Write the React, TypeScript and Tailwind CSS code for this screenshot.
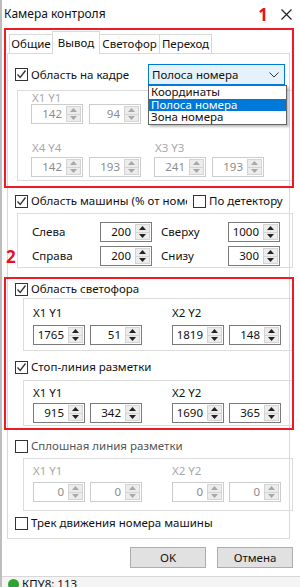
import React from "react";

function Check({ on }: { on?: boolean }) {
  return (
    <span className="flex h-[13px] w-[13px] shrink-0 items-center justify-center border border-[#333333] bg-white">
      {on && (
        <svg width="11" height="11" viewBox="0 0 11 11" fill="none">
          <path d="M1.5 5.5 L4.2 8.5 L9.5 1.5" stroke="#333333" strokeWidth="1.3" />
        </svg>
      )}
    </span>
  );
}

function Spin({ value, off }: { value: string; off?: boolean }) {
  return (
    <div
      className={
        off
          ? "flex h-[20px] w-[52px] shrink-0 border border-[#cccccc] bg-white text-[#8c8c8c]"
          : "flex h-[20px] w-[52px] shrink-0 border border-[#7a7a7a] bg-white text-[#111111]"
      }
    >
      <div className="flex-1 pr-[4px] text-right leading-[18px]">{value}</div>
      <div className="my-[1px] mr-[1px] flex w-[15px] flex-col border border-[#d4d4d4] bg-[#ececec]">
        <div className="flex flex-1 items-center justify-center border-b border-[#d4d4d4]">
          <svg width="7" height="4" viewBox="0 0 7 4">
            <path d="M0 4 L3.5 0 L7 4 Z" fill={off ? "#a8a8a8" : "#222222"} />
          </svg>
        </div>
        <div className="flex flex-1 items-center justify-center">
          <svg width="7" height="4" viewBox="0 0 7 4">
            <path d="M0 0 L3.5 4 L7 0 Z" fill={off ? "#a8a8a8" : "#222222"} />
          </svg>
        </div>
      </div>
    </div>
  );
}

function CheckRow({ on, label, dim }: { on?: boolean; label: string; dim?: boolean }) {
  return (
    <div className="flex h-[16px] items-center gap-[3px]">
      <Check on={on} />
      <span className={dim ? "whitespace-nowrap text-[#555555]" : "whitespace-nowrap"}>{label}</span>
    </div>
  );
}

export default function App() {
  const tabs = [
    { t: "Общие", w: "w-[44px]" },
    { t: "Вывод", w: "w-[48px]", sel: true },
    { t: "Светофор", w: "w-[61px]" },
    { t: "Переход", w: "w-[53px]" },
  ];
  return (
    <div className="relative h-[587px] w-[300px] overflow-hidden border-l-2 border-[#bdbdbd] bg-white font-['Noto_Sans','DejaVu_Sans',sans-serif] text-[11.5px] text-[#111111]">
      {/* title bar */}
      <div className="flex h-[28px] items-center pl-[2px] pr-[8px]">
        <span className="flex-1 text-[12px]">Камера контроля</span>
        <span className="mr-[13px] text-[17px] font-bold leading-none text-[#e81123]">1</span>
        <svg width="11" height="11" viewBox="0 0 11 11">
          <path d="M0.5 0.5 L10.5 10.5 M10.5 0.5 L0.5 10.5" stroke="#222222" strokeWidth="1.2" />
        </svg>
      </div>

      {/* tabs */}
      <div className="ml-[8px] flex h-[25px] items-end">
        {tabs.map((tb) =>
          tb.sel ? (
            <div
              key={tb.t}
              className={`relative z-10 -mb-px -ml-px flex h-[23px] ${tb.w} items-start justify-center border border-b-0 border-[#d9d9d9] bg-white pt-[2px]`}
            >
              {tb.t}
            </div>
          ) : (
            <div
              key={tb.t}
              className={`-ml-px flex h-[19px] ${tb.w} items-center justify-center border border-b-0 border-[#d9d9d9] bg-white`}
            >
              {tb.t}
            </div>
          )
        )}
      </div>

      {/* panel */}
      <div className="ml-[5px] w-[283px] border border-[#d9d9d9] pb-[7px] pl-[7px]">
        {/* row 1 */}
        <div className="mt-[10px] flex h-[21px] items-center">
          <div className="w-[133px]">
            <CheckRow on label="Область на кадре" />
          </div>
          <div className="flex h-[21px] w-[137px] items-center justify-between border border-[#0078d7] bg-[#e5f1fb] pl-[3px] pr-[5px]">
            <span>Полоса номера</span>
            <svg width="10" height="6" viewBox="0 0 10 6" fill="none">
              <path d="M0.5 0.5 L5 5 L9.5 0.5" stroke="#333333" strokeWidth="1" />
            </svg>
          </div>
        </div>

        {/* group 1 (disabled) */}
        <div className="ml-[2px] mt-[5px] w-[276px] border border-[#dcdcdc] pb-[3px]">
          <div className="flex h-[13px] items-center pl-[14px] text-[#a8a8a8]">
            <span className="w-[123px]">X1 Y1</span>
            <span>X2 Y2</span>
          </div>
          <div className="flex pl-[13px]">
            <Spin value="142" off />
            <div className="ml-[6px]"><Spin value="94" off /></div>
            <div className="ml-[13px]"><Spin value="241" off /></div>
            <div className="ml-[6px]"><Spin value="94" off /></div>
          </div>
          <div className="mt-[17px] flex h-[14px] items-center pl-[14px] text-[#a8a8a8]">
            <span className="w-[123px]">X4 Y4</span>
            <span>X3 Y3</span>
          </div>
          <div className="mt-[2px] flex pl-[13px]">
            <Spin value="142" off />
            <div className="ml-[6px]"><Spin value="193" off /></div>
            <div className="ml-[13px]"><Spin value="241" off /></div>
            <div className="ml-[6px]"><Spin value="193" off /></div>
          </div>
        </div>

        {/* car area */}
        <div className="mt-[12px] flex items-center">
          <div className="w-[172px] overflow-hidden">
            <CheckRow on label="Область машины (% от номера)" />
          </div>
          <div className="ml-[6px]">
            <CheckRow label="По детектору" />
          </div>
        </div>
        <div className="ml-[2px] mt-[4px] w-[276px] border border-[#dcdcdc] pb-[1px] pt-[8px]">
          <div className="flex h-[20px] items-center pl-[14px]">
            <span className="w-[68px]">Слева</span>
            <Spin value="200" />
            <span className="w-[76px] pl-[9px]">Сверху</span>
            <Spin value="1000" />
          </div>
          <div className="mt-[4px] flex h-[20px] items-center pl-[14px]">
            <span className="w-[68px]">Справа</span>
            <Spin value="200" />
            <span className="w-[76px] pl-[9px]">Снизу</span>
            <Spin value="300" />
          </div>
        </div>

        {/* traffic light */}
        <div className="mt-[13px]">
          <CheckRow on label="Область светофора" />
        </div>
        <div className="ml-[8px] mt-[1px] w-[270px] border border-[#dcdcdc] pb-[5px] pt-[7px]">
          <div className="flex h-[14px] items-center pl-[9px]">
            <span className="w-[139px]">X1 Y1</span>
            <span>X2 Y2</span>
          </div>
          <div className="mt-[5px] flex pl-[9px]">
            <Spin value="1765" />
            <div className="ml-[5px]"><Spin value="51" /></div>
            <div className="ml-[30px]"><Spin value="1819" /></div>
            <div className="ml-[5px]"><Spin value="148" /></div>
          </div>
        </div>

        {/* stop line */}
        <div className="mt-[8px]">
          <CheckRow on label="Стоп-линия разметки" />
        </div>
        <div className="ml-[8px] mt-[5px] w-[270px] border border-[#dcdcdc] pb-[2px] pt-[5px]">
          <div className="flex h-[14px] items-center pl-[9px]">
            <span className="w-[139px]">X1 Y1</span>
            <span>X2 Y2</span>
          </div>
          <div className="mt-[3px] flex pl-[9px]">
            <Spin value="915" />
            <div className="ml-[5px]"><Spin value="342" /></div>
            <div className="ml-[30px]"><Spin value="1690" /></div>
            <div className="ml-[5px]"><Spin value="365" /></div>
          </div>
        </div>

        {/* solid line */}
        <div className="mt-[12px]">
          <CheckRow label="Сплошная линия разметки" dim />
        </div>
        <div className="ml-[8px] mt-[4px] w-[270px] border border-[#dcdcdc] pb-[8px] pt-[5px]">
          <div className="flex h-[14px] items-center pl-[9px] text-[#a8a8a8]">
            <span className="w-[139px]">X1 Y1</span>
            <span>X2 Y2</span>
          </div>
          <div className="mt-[4px] flex pl-[9px]">
            <Spin value="0" off />
            <div className="ml-[5px]"><Spin value="0" off /></div>
            <div className="ml-[30px]"><Spin value="0" off /></div>
            <div className="ml-[5px]"><Spin value="0" off /></div>
          </div>
        </div>

        <div className="mt-[4px]">
          <CheckRow label="Трек движения номера машины" />
        </div>
      </div>

      {/* buttons */}
      <div className="mt-[8px] flex justify-end gap-[11px] pr-[7px]">
        <button className="h-[21px] w-[76px] border border-[#adadad] bg-[#e1e1e1]">OK</button>
        <button className="h-[21px] w-[76px] border border-[#adadad] bg-[#e1e1e1]">Отмена</button>
      </div>

      {/* status bar */}
      <div className="mt-[8px] flex items-center gap-[3px] border-t border-[#d7d7d7] bg-[#f4f4f4] pl-[6px] pt-[1px] leading-[12px]">
        <span className="h-[11px] w-[11px] rounded-full bg-[#2fa32f]" />
        <span>КПУ8: 113</span>
      </div>

      {/* dropdown list */}
      <div className="absolute left-[146px] top-[85px] z-20 w-[139px] border border-[#646464] bg-white leading-[12.5px] shadow-[2px_2px_2px_rgba(0,0,0,0.25)]">
        <div className="pl-[2px]">Координаты</div>
        <div className="bg-[#0078d7] pl-[2px] text-white">Полоса номера</div>
        <div className="pl-[2px]">Зона номера</div>
      </div>

      {/* annotations */}
      <div className="pointer-events-none absolute left-[2px] top-[28px] z-30 h-[160px] w-[290px] border-2 border-[#ed1c24]" />
      <div className="pointer-events-none absolute left-[2px] top-[277px] z-30 h-[153px] w-[290px] border-2 border-[#ed1c24]" />
      <span className="absolute left-[4px] top-[244px] z-30 text-[17px] font-bold text-[#e81123]">2</span>
    </div>
  );
}
